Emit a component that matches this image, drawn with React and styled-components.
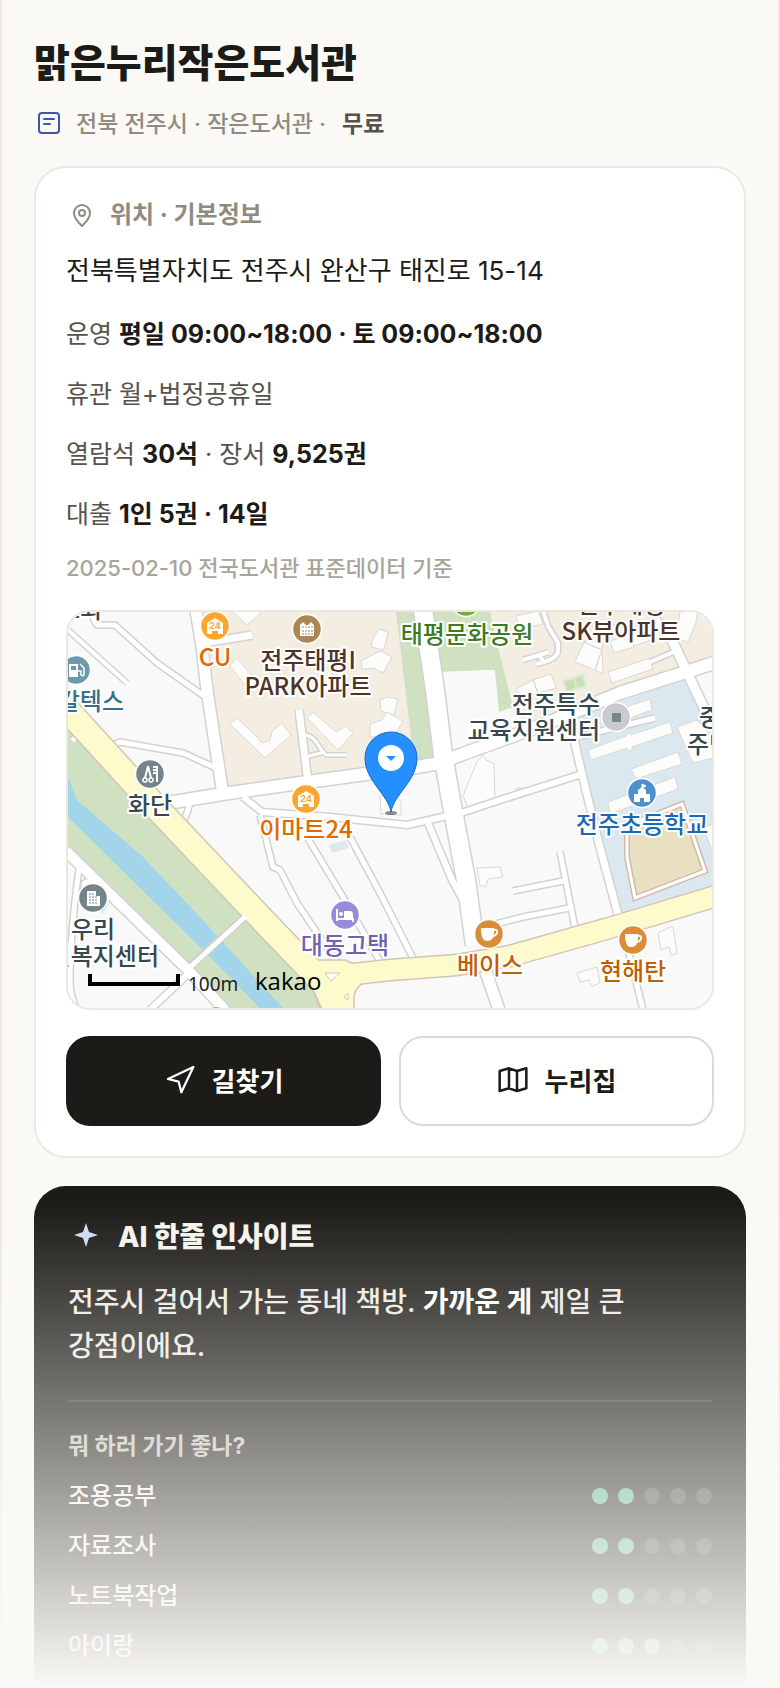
import React from 'react'
import styled, { createGlobalStyle } from 'styled-components'

const GlobalStyle = createGlobalStyle`
  * {
    box-sizing: border-box;
  }
  body {
    margin: 0;
    background: #faf9f6;
    color: #1c1b17;
    font-family: Inter, 'Noto Sans CJK KR', sans-serif;
    font-size: 24px;
  }
  h1, h2, h3, p, ul {
    margin: 0;
    padding: 0;
  }
`

const Page = styled.main`
  position: relative;
  display: flex;
  flex-direction: column;
  gap: 28px;
  min-height: 100vh;
  padding: 38px 32px 0;
  border: solid #ebe9e1;
  border-width: 0 2px;
`
const Fade = styled.div`
  position: absolute;
  left: -2px;
  right: -2px;
  bottom: 0;
  height: 484px;
  pointer-events: none;
  background: linear-gradient(rgba(250, 249, 246, 0), #faf9f6);
`

const Header = styled.header`
  display: flex;
  flex-direction: column;
  gap: 12px;
`
const Title = styled.h1`
  font-size: 39px;
  font-weight: 800;
  line-height: 50px;
`
const Meta = styled.p`
  display: flex;
  align-items: center;
  gap: 12px;
  line-height: 48px;
  font-size: 23px;
  font-weight: 500;
  color: #8f8b80;
  strong {
    margin-left: 4px;
    font-weight: 600;
    color: #57534a;
  }
`

const Card = styled.section`
  padding: 22px 30px 30px;
  margin-top: -10px;
  background: #fff;
  border: 2px solid #ebe9e1;
  border-radius: 32px;
`
const CardTitle = styled.h2`
  display: flex;
  align-items: center;
  gap: 12px;
  line-height: 50px;
  font-size: 24px;
  font-weight: 700;
  color: #8f8b80;
`
const Address = styled.p`
  padding: 4px 0 6px;
  font-size: 26px;
  font-weight: 400;
  line-height: 54px;
`
const Info = styled.p`
  font-size: 25px;
  line-height: 60px;
  color: #57534a;
  strong {
    font-weight: 700;
    color: #1c1b17;
  }
`
const Source = styled.p`
  padding-bottom: 18px;
  font-size: 22px;
  font-weight: 500;
  line-height: 48px;
  color: #a8a498;
`

const MapBox = styled.div`
  overflow: hidden;
  border: 2px solid #ebe7e1;
  border-radius: 24px;
  svg {
    display: block;
    width: 100%;
    height: auto;
  }
`
const MapLabel = styled.text`
  font-family: 'Noto Sans CJK KR', sans-serif;
  font-size: 24px;
  font-weight: 500;
  text-anchor: ${props => props.$anchor || 'middle'};
  fill: ${props => props.$color || '#37474f'};
  stroke: #fff;
  stroke-width: 4px;
  stroke-linejoin: round;
  paint-order: stroke;
`
const ScaleText = styled.text`
  font-family: 'Noto Sans', sans-serif;
  font-size: 19px;
  fill: #222;
`
const Brand = styled.text`
  font-family: 'Open Sans', sans-serif;
  font-size: 24px;
  font-weight: 500;
  fill: #000;
`

const Actions = styled.div`
  display: grid;
  grid-template-columns: 1fr 1fr;
  gap: 18px;
  margin-top: 26px;
`
const Action = styled.button`
  display: flex;
  align-items: center;
  justify-content: center;
  gap: 16px;
  height: 90px;
  padding: 0 0 4px;
  font-family: inherit;
  font-size: 26px;
  font-weight: 700;
  color: ${props => (props.$primary ? '#fff' : '#1c1b17')};
  background: ${props => (props.$primary ? '#1c1b17' : '#fff')};
  border: 2px solid ${props => (props.$primary ? '#1c1b17' : '#dcdad1')};
  border-radius: 24px;
`

const Insight = styled.section`
  flex: 1;
  padding: 26px 34px 0;
  background: #1c1b17;
  border-radius: 32px 32px 0 0;
  color: #f5f3ee;
`
const InsightTitle = styled.h2`
  display: flex;
  align-items: center;
  gap: 14px;
  font-size: 28px;
  font-weight: 800;
  line-height: 50px;
`
const Quote = styled.p`
  padding: 18px 0 32px;
  font-size: 28px;
  font-weight: 500;
  line-height: 44px;
  color: #eceae3;
  border-bottom: 2px solid rgba(255, 255, 255, 0.12);
  strong {
    font-weight: 700;
    color: #fff;
  }
`
const Question = styled.h3`
  padding-top: 19px;
  font-size: 23px;
  font-weight: 700;
  line-height: 50px;
  color: #c4c1b6;
`
const Ratings = styled.ul`
  list-style: none;
`
const Rating = styled.li`
  display: flex;
  align-items: center;
  justify-content: space-between;
  line-height: 50px;
  font-weight: 500;
`
const Dots = styled.span`
  display: flex;
  gap: 10px;
`
const Dot = styled.i`
  width: 16px;
  height: 16px;
  border-radius: 50%;
  background: ${props => (props.$on ? '#5bb58a' : '#3f3e3a')};
`

const Stroke = styled.svg`
  flex: none;
  fill: none;
  stroke: ${props => props.$color || 'currentColor'};
  stroke-linecap: round;
  stroke-linejoin: round;
`

const DocIcon = () => (
  <Stroke width="30" height="30" viewBox="0 1 30 30" $color="#3d57a8" strokeWidth="2">
    <rect x="5" y="5" width="20" height="20" rx="3" />
    <path d="M10 11h10M10 16h6" />
  </Stroke>
)
const PlaceIcon = () => (
  <Stroke width="32" height="32" viewBox="0 0 32 32" strokeWidth="2">
    <path d="M16 27c-2-2-8-7-8-13a8 8 0 0 1 16 0c0 6-6 11-8 13z" />
    <circle cx="16" cy="14" r="3" />
  </Stroke>
)
const RouteIcon = () => (
  <Stroke width="32" height="32" viewBox="0 -1 24 24" strokeWidth="1.7">
    <path d="M3 11 22 2l-9 19-2-8z" />
  </Stroke>
)
const FoldedMapIcon = () => (
  <Stroke width="32" height="32" viewBox="0 -1 24 24" strokeWidth="1.9">
    <path d="M2 5l7-2 6 2 7-2v15l-7 2-6-2-7 2zM9 3v15M15 5v15" />
  </Stroke>
)
const SparkIcon = () => (
  <svg width="36" height="36" viewBox="0 0 36 36" fill="#ccd8f5">
    <path d="M18 4l3 9 9 3-9 3-3 9-3-9-9-3 9-3z" />
  </svg>
)

// drawn in order: wider streets sit on top of the lanes
const lanes = [
  { d: 'M68 630L127 683', w: 4 },
  { d: 'M90 612L97 625H115L157 663L204 696', w: 5 },
  { d: 'M111 746L120 742L183 753L216 768', w: 5 },
  { d: 'M204 643L252 635', w: 7 },
  { d: 'M299 710L308 782', w: 7 },
  { d: 'M305 735C318 736 320 754 327 755H347M305 757L325 752', w: 3 },
  { d: 'M190 802Q186 822 176 828', w: 5 },
  { d: 'M243 797L262 812L330 817L407 825L447 816', w: 6 },
  { d: 'M260 815L273 867L280 870L297 903L342 970', w: 5 },
  { d: 'M307 837L343 897L382 965', w: 5 },
  { d: 'M350 837L380 893L415 962', w: 5 },
  { d: 'M428 823L452 880L464 902', w: 6 },
  { d: 'M560 852L577 938', w: 5 },
  { d: 'M513 891L563 881M480 928L523 917L569 908', w: 5 },
  { d: 'M627 945L643 1010', w: 5 },
  { d: 'M543 610L548 626L558 643V652Q556 660 536 664M523 660L549 652M540 656L544 663', w: 4 },
  { d: 'M650 662L676 651', w: 4 },
  { d: 'M655 620L672 640L687 672L713 727', w: 9 },
  { d: 'M573 738L655 718', w: 5 },
  { d: 'M461 813L500 800L582 774', w: 6 },
  { d: 'M573 735L582 774L598 840L620 922', w: 7 },
  { d: 'M80 862Q70 930 70 985Q71 1000 78 1010M84 890V884Q86 880 92 884', w: 5 },
  { d: 'M150 1010L188 974', w: 6 }
]
const streets = [
  { d: 'M196 610L202 647L207 690L216 750L223 794', w: 11 },
  { d: 'M150 806L222 794L300 783L417 767L440 763L460 755L540 726L620 693L714 663', w: 12 },
  { d: 'M423 610L435 690L443 755L451 800L466 880L475 945', w: 18 },
  { d: 'M482 962L487 975L499 1010', w: 11 },
  { d: 'M66 851L188 970L225 1010', w: 10 }
]

const buildings = [
  'M230 724l7-6 20 19 5 6 8-3 2-9 10-8 9 12-26 23z',
  'M307 718l6-6 23 20 10-6 7 7-15 17z',
  'M230 666l6-8 20 22-8 9z',
  'M233 612l14 13 13-11v-4h-27z',
  'M310 664l26 30 12-14-8-8-6 4-16-16z',
  'M373 638l6-9 9 3-2 10-3 8-12-3z',
  'M361 661l19-10 12 6-9 16-10-5-11 1z',
  'M388 697l10 2-4 16-13-4-1-11z',
  'M370 724l12-4 5-8 16 9-9 15-24 1z',
  'M516 616l22-5 5 13-23 5z',
  'M516 689l17-9 5 13-13 5zM533 680l18-6 5 14-18 5z',
  'M575 662l9-20 18 8-7 20zM584 642l11-6 8 7-1 7zM595 670l7-20 1 24z',
  'M610 641l20-7 4 13-20 6zM630 634l21-7 3 12-20 7zM651 627l18-6 4 11-19 7z',
  'M680 612l18-2-2 12-8 20-12-4z',
  'M608 672l42-14 3 11-41 14z',
  'M588 750l38-14 1-3h4v2l39-13 3 11-41 14v4h-4l-1-3-36 12z',
  'M631 769l47-17 4 12-46 15z',
  'M608 802l67-25 3 12-68 25z',
  'M626 707l24-8 2 11-22 8z',
  'M677 727l20-7 16 20v18l-20 5z',
  'M477 762l6-7 3 5 8 4 1 37-26 9-6-14z',
  'M477 868l23-1 3 10-15 2-2 7h-6z',
  'M658 933l15-7 4 28-6 1-2-8-8 3z',
  'M577 973l20-6 3 16-8 3-3-6-9 2z',
  'M380 796l12-5 9 11v13l-20-1z',
  'M703 827l10-3v28z',
  'M70 739l5-5 4 4-5 5z'
]

const Poi = ({ x, y, color, children }) => (
  <g transform={`translate(${x} ${y})`}>
    <circle r="14.5" fill={color} stroke="#fff" strokeWidth="1.5" />
    {children}
  </g>
)
const StoreGlyph = () => (
  <g>
    <path d="M-8 8V-3L0-8l8 5V8H3V5H-3V8z" fill="#fff" />
    <text y="3" textAnchor="middle" fontFamily="Inter, sans-serif" fontSize="9" fontWeight="700" fill="#fda62e">24</text>
  </g>
)
const CupGlyph = () => (
  <g fill="#fff">
    <path d="M-8-6H5V-2Q5 7-2 7Q-8 7-8-6z" />
    <path d="M4-4Q9-5 8-1Q7 2 3 2" fill="none" stroke="#fff" strokeWidth="2" />
  </g>
)

const CityMap = () => (
  <svg viewBox="68 612 644 396" role="img" aria-label="위치 지도">
    <rect x="68" y="612" width="644" height="396" fill="#f9f9f9" />
    <path fill="#f3ede2" d="M200 612H398L416 764L228 788L207 660zM485 612H712V660L600 696L530 728L510 708z" />
    <path fill="#d0e1c1" d="M396 612H490L497 643L513 707L499 712L495 670L443 672L433 757L414 762z" />
    <path fill="#f9f9f9" d="M440 672L491 670L497 712L500 738L450 754z" />
    <path fill="#dce8f0" d="M577 716L690 678L712 735V890L623 920L580 750z" />
    <path fill="#dce8f0" d="M329 845l17-5 3 8-17 5zM515 788l8-1v5h-8zM100 908l8-8v6l-6 8z" />
    <path fill="#d0e1c1" d="M68 730L180 850L317 993L325 1008H220L188 970L68 849z" />
    <path fill="#a2d5ea" d="M68 777L77 800L142 856L200 917L283 1008H260L203 950L68 817z" />

    <g fill="#fcfcfb" stroke="#dcd8d3">
      {buildings.map(d => <path key={d} d={d} />)}
    </g>
    <path fill="#c6e0b4" stroke="#dcebd0" strokeWidth="2" d="M563 681l20-6 3 11-19 6zM574 677l3 13" />

    <g fill="none" strokeLinejoin="round">
      {[...lanes, ...streets].map(r => <path key={r.d} d={r.d} stroke="#d2d2d2" strokeWidth={r.w + 3} />)}
      <path d="M188 968L248 914" stroke="#d2cfcb" strokeWidth="8" />
      {[...lanes, ...streets].map(r => <path key={r.d} d={r.d} stroke="#fff" strokeWidth={r.w} />)}
    </g>

    <path fill="none" stroke="#d1c6b8" strokeWidth="27" strokeLinejoin="round" d="M60 702L155 806L257 914L325 985L335 1012" />
    <path fill="none" stroke="#d1c6b8" strokeWidth="23" strokeLinejoin="round" d="M325 980L345 975L390 970L457 965L510 956L620 925L716 896" />
    <path fill="#fdfacb" stroke="#d1c6b8" strokeWidth="1.5" d="M310 960H345L380 975Q354 983 354 998V1010H325z" />
    <path fill="none" stroke="#fdfacb" strokeWidth="24" strokeLinejoin="round" d="M60 702L155 806L257 914L325 985L337 1012" />
    <path fill="none" stroke="#fdfacb" strokeWidth="20" strokeLinejoin="round" d="M322 978L345 975L390 970L457 965L510 956L620 925L716 896" />
    <path fill="#fff" stroke="#d1c6b8" d="M325 973h15l-9 8zM344 997l4-4v7z" />
    <path fill="none" stroke="#fff" strokeWidth="5" d="M186 971L246 916" />

    <path fill="#e9dfc1" stroke="#d3b9aa" strokeWidth="6" d="M627 826L682 804L705 871L635 898L627 857z" />
    <path fill="none" stroke="#fff" strokeWidth="3" d="M627 826L682 804L705 871L635 898L627 857z" />

    <Poi x="215" y="626" color="#fda62e"><StoreGlyph /></Poi>
    <Poi x="307" y="629" color="#ab8653">
      <path d="M-7 7V-4l3-3 3 3h2l3-3 3 3V7z" fill="#fff" />
      <path d="M-5-2H6M-5 2H6M-5 5H6" stroke="#ab8653" strokeDasharray="2 1" />
    </Poi>
    <Poi x="76" y="670" color="#6d99ab">
      <path d="M-7-6H2V7H-7z" fill="#fff" />
      <path d="M-5-4H0V0H-5z" fill="#6d99ab" />
      <path d="M2 1H5V5Q8 7 8 4V-2L4-6" fill="none" stroke="#fff" strokeWidth="1.5" />
    </Poi>
    <Poi x="150" y="774" color="#75838a">
      <path d="M-2-8L-5 4M-2-8L1 4M3-7H7V8M3-4H7M3-1H7" fill="none" stroke="#fff" strokeWidth="2" />
      <circle cx="-5" cy="6" r="2" fill="none" stroke="#fff" strokeWidth="1.5" />
      <circle cx="1" cy="6" r="2" fill="none" stroke="#fff" strokeWidth="1.5" />
    </Poi>
    <Poi x="306" y="799" color="#fda62e"><StoreGlyph /></Poi>
    <Poi x="93" y="898" color="#75838a">
      <path d="M-6 8V-7H3V-2H7V8z" fill="#fff" />
      <path d="M-4-4H2M-4-1H5M-4 2H5M-4 5H5" stroke="#75838a" strokeDasharray="2 1" />
    </Poi>
    <Poi x="345" y="915" color="#9a8bd8">
      <path d="M-8-6V6M-8 4H8V7" fill="none" stroke="#fff" strokeWidth="2" />
      <path d="M-1-4H5Q8-4 8 0V4H-1z" fill="#fff" />
      <circle cx="-4" cy="-1" r="2" fill="#fff" />
    </Poi>
    <Poi x="489" y="934" color="#da8d35"><CupGlyph /></Poi>
    <Poi x="633" y="940" color="#da8d35"><CupGlyph /></Poi>
    <Poi x="616" y="717" color="#c9c9cf"><path d="M-4-4H5V5H-4z" fill="#75878d" /></Poi>
    <Poi x="642" y="793" color="#4c91cd">
      <path d="M-8 9V1h4v-4l4-3 4 3v4h4v8H2V5h-4v4z" fill="#fff" />
      <path d="M0-4v-5l4 2-4 2" fill="#fff" stroke="#fff" />
    </Poi>
    <Poi x="466" y="602" color="#6fae43" />
    <Poi x="216" y="1021" color="#6f9a43" />

    <MapLabel x="80" y="618">교회</MapLabel>
    <MapLabel x="215" y="666" $color="#e06a00">CU</MapLabel>
    <MapLabel x="308" y="669" $color="#4e3426">전주태평I</MapLabel>
    <MapLabel x="308" y="695" $color="#4e3426">PARK아파트</MapLabel>
    <MapLabel x="124" y="710" $anchor="end" $color="#37708a">GS칼텍스</MapLabel>
    <MapLabel x="467" y="643" $color="#3d7a26">태평문화공원</MapLabel>
    <MapLabel x="621" y="613" $color="#4e3426">전주태평</MapLabel>
    <MapLabel x="621" y="640" $color="#4e3426">SK뷰아파트</MapLabel>
    <MapLabel x="600" y="713" $anchor="end">전주특수</MapLabel>
    <MapLabel x="600" y="739" $anchor="end">교육지원센터</MapLabel>
    <MapLabel x="699" y="726" $anchor="start">중앙동</MapLabel>
    <MapLabel x="687" y="753" $anchor="start">주민센터</MapLabel>
    <MapLabel x="150" y="814">화단</MapLabel>
    <MapLabel x="306" y="838" $color="#e06a00">이마트24</MapLabel>
    <MapLabel x="642" y="833" $color="#1769b5">전주초등학교</MapLabel>
    <MapLabel x="93" y="938">우리</MapLabel>
    <MapLabel x="159" y="965" $anchor="end">노인복지센터</MapLabel>
    <MapLabel x="345" y="954" $color="#7161b5">대동고택</MapLabel>
    <MapLabel x="490" y="974" $color="#c05f00">베이스</MapLabel>
    <MapLabel x="633" y="980" $color="#c05f00">현해탄</MapLabel>

    <path fill="none" stroke="#000" strokeWidth="4" d="M90 974V984H178V974" />
    <ScaleText x="188" y="991">100m</ScaleText>
    <Brand x="255" y="990">kakao</Brand>

    <ellipse cx="391" cy="813" rx="6" ry="2" fill="#555" opacity="0.7" />
    <path fill="#258fff" stroke="#1668cc" d="M391 812C388 794 365 781 365 758a26 26 0 0 1 52 0C417 781 394 794 391 812z" />
    <circle cx="391" cy="758" r="13" fill="#fff" />
    <path fill="#258fff" d="M386 756H396L391 761z" />
  </svg>
)

const ratings = [
  { label: '조용공부', score: 2 },
  { label: '자료조사', score: 2 },
  { label: '노트북작업', score: 2 },
  { label: '아이랑', score: 3 }
]

const App = () => {
  return (
    <Page>
      <GlobalStyle />
      <Header>
        <Title>맑은누리작은도서관</Title>
        <Meta>
          <DocIcon />
          <span>전북 전주시 · 작은도서관 ·</span>
          <strong>무료</strong>
        </Meta>
      </Header>

      <Card>
        <CardTitle>
          <PlaceIcon />
          위치 · 기본정보
        </CardTitle>
        <Address>전북특별자치도 전주시 완산구 태진로 15-14</Address>
        <Info>운영 <strong>평일 09:00~18:00 · 토 09:00~18:00</strong></Info>
        <Info>휴관 월+법정공휴일</Info>
        <Info>열람석 <strong>30석</strong> · 장서 <strong>9,525권</strong></Info>
        <Info>대출 <strong>1인 5권 · 14일</strong></Info>
        <Source>2025-02-10 전국도서관 표준데이터 기준</Source>
        <MapBox>
          <CityMap />
        </MapBox>
        <Actions>
          <Action type="button" $primary>
            <RouteIcon />
            길찾기
          </Action>
          <Action type="button">
            <FoldedMapIcon />
            누리집
          </Action>
        </Actions>
      </Card>

      <Insight>
        <InsightTitle>
          <SparkIcon />
          AI 한줄 인사이트
        </InsightTitle>
        <Quote>
          전주시 걸어서 가는 동네 책방. <strong>가까운 게</strong> 제일 큰<br />
          강점이에요.
        </Quote>
        <Question>뭐 하러 가기 좋나?</Question>
        <Ratings>
          {ratings.map(item => (
            <Rating key={item.label}>
              {item.label}
              <Dots>
                {[1, 2, 3, 4, 5].map(n => <Dot key={n} $on={n <= item.score} />)}
              </Dots>
            </Rating>
          ))}
        </Ratings>
      </Insight>
      <Fade />
    </Page>
  )
}

export default App
